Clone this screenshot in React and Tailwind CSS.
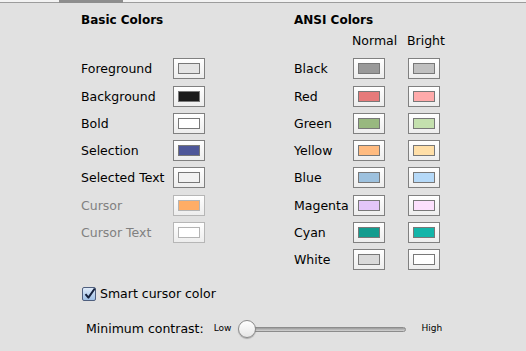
import React from 'react';

// Terminal color preferences pane

const basicColors = [
    { label: 'Foreground', fill: 'bg-[#e4e4e4]' },
    { label: 'Background', fill: 'bg-[#1a1a1a]' },
    { label: 'Bold', fill: 'bg-[#ffffff]' },
    { label: 'Selection', fill: 'bg-[#4e5799]' },
    { label: 'Selected Text', fill: 'bg-[#f2f2f2]' },
    { label: 'Cursor', fill: 'bg-[#ffad66]', disabled: true },
    { label: 'Cursor Text', fill: 'bg-[#ffffff]', disabled: true },
];

const ansiColors = [
    { label: 'Black', normal: 'bg-[#999999]', bright: 'bg-[#c0c0c0]' },
    { label: 'Red', normal: 'bg-[#e67a7a]', bright: 'bg-[#ffaaaa]' },
    { label: 'Green', normal: 'bg-[#98b87f]', bright: 'bg-[#c4e0ae]' },
    { label: 'Yellow', normal: 'bg-[#ffbb80]', bright: 'bg-[#ffdfa8]' },
    { label: 'Blue', normal: 'bg-[#9dc1de]', bright: 'bg-[#b5d9f8]' },
    { label: 'Magenta', normal: 'bg-[#e3c6f9]', bright: 'bg-[#fce0fd]' },
    { label: 'Cyan', normal: 'bg-[#139c8f]', bright: 'bg-[#13b5a9]' },
    { label: 'White', normal: 'bg-[#dadada]', bright: 'bg-[#ffffff]' },
];

const rowHeights = ['h-[27px]', 'h-[28px]', 'h-[27px]', 'h-[27px]', 'h-[27px]', 'h-[28px]', 'h-[27px]', 'h-[27px]'];

const Swatch = ({ fill, disabled }) => (
    <div
        className={`w-[32px] h-[21px] border p-[4px] bg-gradient-to-b from-[#ffffff] to-[#ededed] ${
            disabled ? 'border-[#b6b6b6]' : 'border-[#808080]'
        }`}
    >
        <div className={`w-[22px] h-[11px] border ${disabled ? 'border-[#b4b4b4]' : 'border-[#787878]'} ${fill}`} />
    </div>
);

const App = () => {
    return (
        <div
            className="w-[526px] h-[351px] bg-[#e1e1e1] overflow-hidden text-[12.5px] text-black"
            style={{ fontFamily: '"DejaVu Sans", sans-serif' }}
        >
            {/* tab strip */}
            <div className="flex h-[3px]">
                <div className="w-[59px] bg-[#f3f3f3] border-b border-[#9c9c9c]" />
                <div className="w-[64px] bg-[#8d8d8d]" />
                <div className="flex-1 bg-[#f3f3f3] border-b border-[#9c9c9c]" />
            </div>

            <div className="pl-[81px] pt-[9px] flex">
                {/* Basic colors */}
                <div className="w-[213px]">
                    <div className="h-[16px] leading-[16px] font-bold text-[12px]">Basic Colors</div>
                    <div className="h-[16px] mt-[5px] mb-[6px]" />
                    {basicColors.map((c, i) => (
                        <div key={c.label} className={`flex items-center ${rowHeights[i]}`}>
                            <span className={`w-[92px] mt-[2px] ${c.disabled ? 'text-[#808080]' : ''}`}>{c.label}</span>
                            <Swatch fill={c.fill} disabled={c.disabled} />
                        </div>
                    ))}
                </div>

                {/* ANSI colors */}
                <div>
                    <div className="h-[16px] leading-[16px] font-bold text-[12px]">ANSI Colors</div>
                    <div className="h-[16px] leading-[16px] mt-[5px] mb-[6px] flex">
                        <span className="w-[58px]" />
                        <span className="w-[55px]">Normal</span>
                        <span>Bright</span>
                    </div>
                    {ansiColors.map((c, i) => (
                        <div key={c.label} className={`flex items-center ${rowHeights[i]}`}>
                            <span className="w-[59px] mt-[2px]">{c.label}</span>
                            <Swatch fill={c.normal} />
                            <div className="w-[23px]" />
                            <Swatch fill={c.bright} />
                        </div>
                    ))}
                </div>
            </div>

            {/* smart cursor */}
            <div className="pl-[82px] mt-[13px] flex items-center h-[16px]">
                <div className="w-[14px] h-[14px] rounded-[2px] border border-[#4f5f7e] bg-gradient-to-b from-[#dfeaf8] to-[#9fc0e6] relative">
                    <svg viewBox="0 0 14 14" className="absolute -top-[1px] left-0 w-[14px] h-[14px]">
                        <path d="M2.5 7.2 L5.4 10.6 L11.8 1.5" fill="none" stroke="#14213d" strokeWidth="2" strokeLinejoin="round" />
                    </svg>
                </div>
                <span className="ml-[4px]">Smart cursor color</span>
            </div>

            {/* minimum contrast */}
            <div className="pl-[86px] mt-[17px] flex items-center h-[20px]">
                <span>Minimum contrast:</span>
                <span className="ml-[10px] text-[9px]">Low</span>
                <div className="ml-[7px] w-[168px] h-[20px] relative flex items-center">
                    <div className="ml-[9px] w-[159px] h-[5px] rounded-full border border-[#8c8c8c] bg-gradient-to-b from-[#9a9a9a] to-[#d4d4d4]" />
                    <div className="absolute left-0 top-[1px] w-[18px] h-[18px] rounded-full border border-[#8a8a8a] bg-gradient-to-b from-[#ffffff] to-[#e6e6e6] shadow-[0_1px_1px_rgba(0,0,0,0.25)]" />
                </div>
                <span className="ml-[15px] text-[9px]">High</span>
            </div>
        </div>
    );
};

export default App;
